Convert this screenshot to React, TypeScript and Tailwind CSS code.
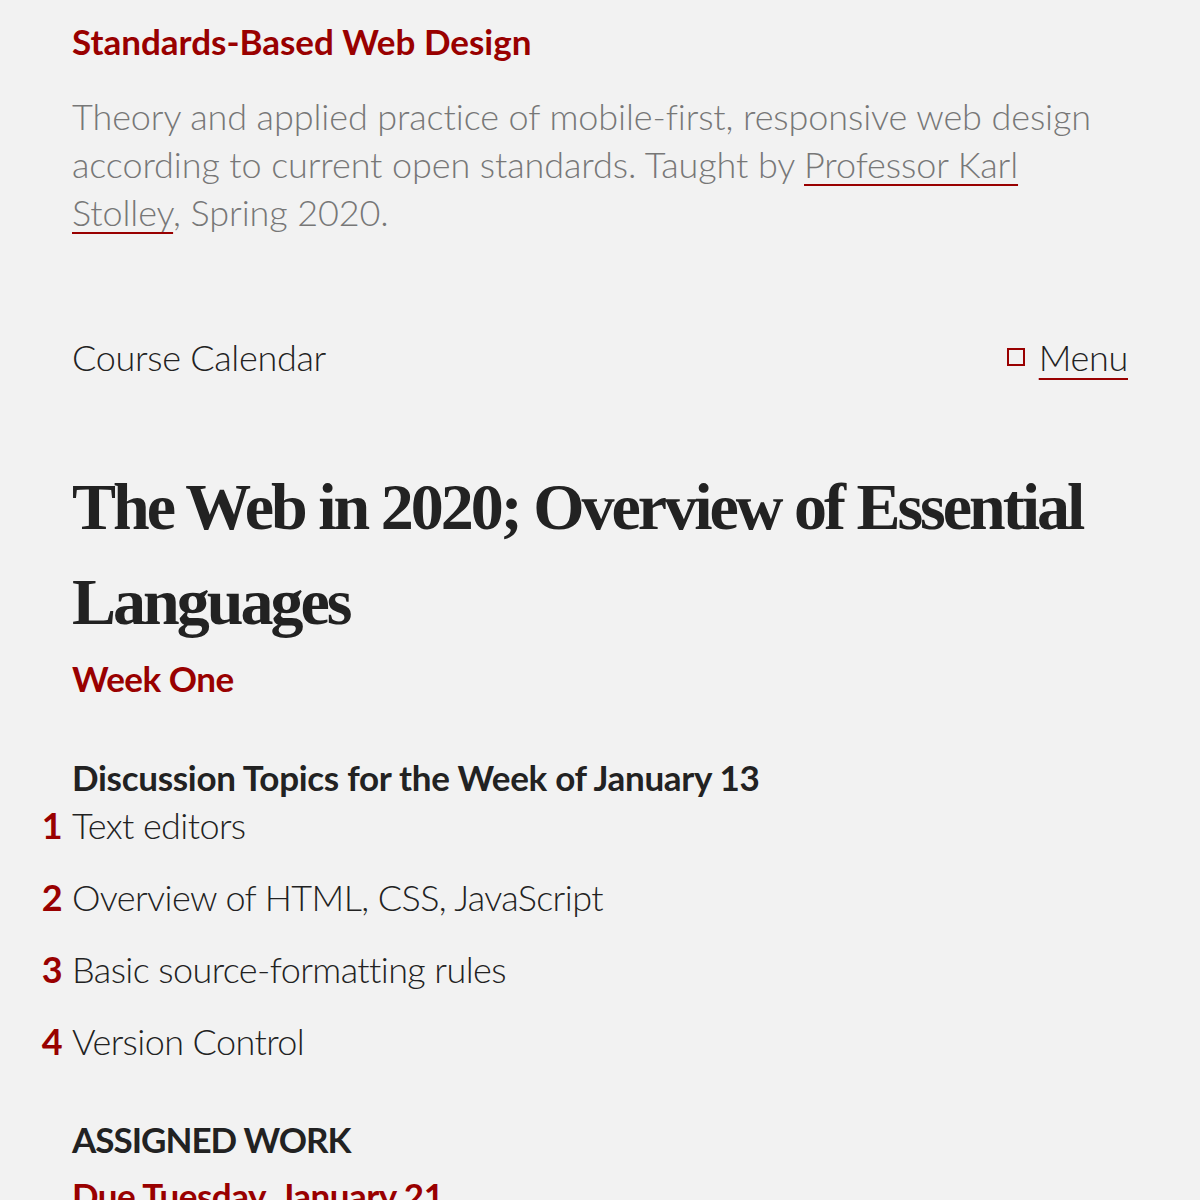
const topics = [
  "Text editors",
  "Overview of HTML, CSS, JavaScript",
  "Basic source-formatting rules",
  "Version Control",
];

const App = () => {
  return (
    <div className="min-h-screen bg-[#f2f2f2] px-[72px] pt-[20px] font-['Lato',sans-serif] text-[#222]">
      <header>
        <h1 className="text-[35px] font-bold leading-[42px] text-[#990000]">
          Standards-Based Web Design
        </h1>
        <p className="mt-[30px] text-[36px] font-light leading-[48px] tracking-[-0.1px] text-[#777]">
          Theory and applied practice of mobile-first, responsive web design
          according to current open standards. Taught by{" "}
          <a
            href="#"
            className="underline decoration-[#990000] decoration-2 underline-offset-[6px]"
          >
            Professor Karl Stolley
          </a>
          , Spring 2020.
        </p>
      </header>

      <nav className="mt-[97px] flex items-center justify-between text-[36px] font-light leading-[48px] tracking-[-0.3px]">
        <span>Course Calendar</span>
        <a href="#" className="flex items-center gap-[14px]">
          <span className="h-[18px] w-[18px] border-2 border-[#990000]" />
          <span className="underline decoration-[#990000] decoration-2 underline-offset-[7px]">
            Menu
          </span>
        </a>
      </nav>

      <main>
        <h2 className="mt-[78px] font-['Liberation_Serif',serif] text-[66px] font-bold leading-[95px] tracking-[-3px] text-[#222]">
          The Web in 2020; Overview of Essential Languages
        </h2>
        <p className="mt-[5px] text-[35px] font-bold leading-[48px] tracking-[-0.5px] text-[#990000]">
          Week One
        </p>

        <h3 className="mt-[51px] text-[35px] font-bold leading-[48px] tracking-[-0.3px]">
          Discussion Topics for the Week of January 13
        </h3>
        <ol className="flex flex-col gap-[24px]">
          {topics.map((t, i) => (
            <li
              key={t}
              className="-ml-[40px] flex gap-[10px] text-[36px] font-light leading-[48px] tracking-[-0.6px]"
            >
              <span className="w-[30px] text-right font-bold text-[#990000]">{i + 1}</span>
              <span>{t}</span>
            </li>
          ))}
        </ol>

        <h3 className="mt-[50px] text-[35px] font-bold uppercase leading-[48px] tracking-[-1px]">
          Assigned Work
        </h3>
        <p className="mt-[8px] text-[35px] font-bold leading-[48px] tracking-[-0.5px] text-[#990000] underline decoration-2 underline-offset-[6px]">
          Due Tuesday, January 21
        </p>
      </main>
    </div>
  );
};

export default App;
